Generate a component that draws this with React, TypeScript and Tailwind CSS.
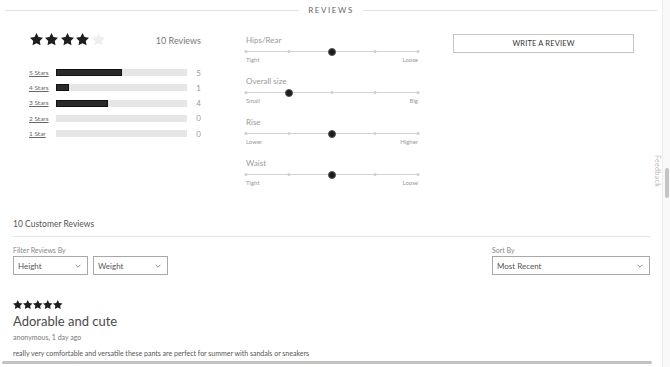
const breakdown = [
  { label: "5 Stars", count: 5, pct: 50 },
  { label: "4 Stars", count: 1, pct: 10 },
  { label: "3 Stars", count: 4, pct: 40 },
  { label: "2 Stars", count: 0, pct: 0 },
  { label: "1 Star", count: 0, pct: 0 },
];

const fits = [
  { name: "Hips/Rear", lo: "Tight", hi: "Loose", pos: 50 },
  { name: "Overall size", lo: "Small", hi: "Big", pos: 25 },
  { name: "Rise", lo: "Lower", hi: "Higher", pos: 50 },
  { name: "Waist", lo: "Tight", hi: "Loose", pos: 50 },
];

function Star({ className }: { className: string }) {
  return (
    <svg viewBox="2 2 20 20" className={className} fill="currentColor">
      <polygon points="12,2 15.09,8.26 22,9.27 17,14.14 18.18,21.02 12,17.77 5.82,21.02 7,14.14 2,9.27 8.91,8.26" />
    </svg>
  );
}

function Chevron() {
  return (
    <svg viewBox="0 0 10 6" className="w-[6px] h-[4px]" fill="none" stroke="#666" strokeWidth="1.3">
      <polyline points="1,1 5,5 9,1" />
    </svg>
  );
}

function Select({ label, className }: { label: string; className: string }) {
  return (
    <div
      className={`h-[19px] border border-[#a8a8a8] flex items-center justify-between pl-[4px] pr-[6px] text-[8px] text-[#555] ${className}`}
    >
      <span>{label}</span>
      <Chevron />
    </div>
  );
}

function FitSlider({ name, lo, hi, pos }: (typeof fits)[number]) {
  return (
    <div>
      <div className="h-[10px] leading-[10px] text-[8px] text-[#999]">{name}</div>
      <div className="relative h-[9px] mt-[2px] flex items-center">
        <div className="w-full h-px bg-[#d4d4d4]" />
        {[0, 25, 50, 75, 100].map((t) => (
          <div
            key={t}
            className="absolute w-[3px] h-[3px] rounded-full bg-[#cfcfcf] -translate-x-1/2"
            style={{ left: `${t}%` }}
          />
        ))}
        <div
          className="absolute w-[8px] h-[8px] rounded-full bg-[#1c1c1c] border border-[#555] -translate-x-1/2"
          style={{ left: `${pos}%` }}
        />
      </div>
      <div className="h-[8px] leading-[8px] flex justify-between text-[6px] text-[#999]">
        <span>{lo}</span>
        <span>{hi}</span>
      </div>
    </div>
  );
}

export default function App() {
  return (
    <div className="relative w-[670px] h-[367px] flex bg-white overflow-hidden font-['Lato','Noto_Sans',sans-serif]">
      <div className="flex-1 min-w-0 flex flex-col">
        <div className="flex-1 min-h-0 overflow-hidden">
          {/* header */}
          <div className="h-[20px] flex items-center pl-[5px] pr-[5px] gap-[8px]">
            <div className="flex-1 h-px bg-[#e2e2e2]" />
            <span className="text-[8px] tracking-[0.2em] text-[#666] px-[1px]">REVIEWS</span>
            <div className="flex-1 h-px bg-[#e2e2e2]" />
          </div>

          {/* summary */}
          <div className="flex pl-[29px]">
            <div className="w-[174px]">
              <div className="mt-[13px] flex items-end justify-between">
                <div className="flex gap-[2.4px] pl-[1px]">
                  {[0, 1, 2, 3, 4].map((i) => (
                    <Star
                      key={i}
                      className={`w-[13px] h-[13px] ${i < 4 ? "text-[#1e1e1e]" : "text-[#eeeeee]"}`}
                    />
                  ))}
                </div>
                <span className="text-[9px] leading-[10px] text-[#777] pr-[2px]">10 Reviews</span>
              </div>
              <div className="mt-[19px]">
                {breakdown.map((b) => (
                  <div key={b.label} className="h-[15.25px] flex items-center">
                    <span className="w-[27px] text-[6.5px] text-[#666] underline">{b.label}</span>
                    <div className="w-[131px] h-[7px] bg-[#e6e6e6]">
                      {b.pct > 0 && (
                        <div
                          className="h-full bg-[#2a2a2a] border border-[#111]"
                          style={{ width: `${b.pct}%` }}
                        />
                      )}
                    </div>
                    <span className="flex-1 text-right pr-[2px] text-[8px] text-[#999]">{b.count}</span>
                  </div>
                ))}
              </div>
            </div>

            <div className="w-[172px] ml-[43px] mt-[15px] flex flex-col gap-[12px]">
              {fits.map((f) => (
                <FitSlider key={f.name} {...f} />
              ))}
            </div>

            <div className="w-[181px] ml-[35px] mt-[14px]">
              <div className="h-[19px] border border-[#c4c4c4] flex items-center justify-center text-[7.5px] text-[#333] tracking-[0.02em]">
                WRITE A REVIEW
              </div>
            </div>
          </div>

          {/* reviews list */}
          <div className="pl-[13px] pr-[12px] mt-[31px]">
            <div className="h-[12px] leading-[12px] text-[8.5px] text-[#555]">10 Customer Reviews</div>
            <div className="mt-[6px] h-px bg-[#e2e2e2]" />
            <div className="mt-[8px] flex justify-between items-end">
              <div>
                <div className="h-[10px] leading-[10px] text-[7px] text-[#888]">Filter Reviews By</div>
                <div className="mt-[1px] flex gap-[5px]">
                  <Select label="Height" className="w-[75px]" />
                  <Select label="Weight" className="w-[75px]" />
                </div>
              </div>
              <div>
                <div className="h-[10px] leading-[10px] text-[7px] text-[#888]">Sort By</div>
                <Select label="Most Recent" className="mt-[1px] w-[158px]" />
              </div>
            </div>

            <div className="mt-[25px] flex gap-[0.5px]">
              {[0, 1, 2, 3, 4].map((i) => (
                <Star key={i} className="w-[9.5px] h-[9.5px] text-[#1e1e1e]" />
              ))}
            </div>
            <div className="mt-[3px] h-[17px] leading-[17px] text-[13px] text-[#4a4a4a]">Adorable and cute</div>
            <div className="mt-[2px] h-[10px] leading-[10px] text-[7px] text-[#777]">anonymous, 1 day ago</div>
            <div className="mt-[6.5px] h-[10px] leading-[10px] text-[7px] text-[#555]">
              really very comfortable and versatile these pants are perfect for summer with sandals or sneakers
            </div>
          </div>
        </div>

        {/* horizontal scrollbar */}
        <div className="h-[6px] pl-[2px] pr-[10px]">
          <div className="h-[3px] rounded-full bg-[#c2c2c2]" />
        </div>
      </div>

      {/* vertical scrollbar */}
      <div className="w-[8px] bg-[#f9f9f9] border-l border-[#ededed] pt-[168px] pl-[2px] pr-[1px]">
        <div className="h-[30px] rounded-full bg-[#c4c4c4]" />
      </div>

      <div className="absolute left-[652px] top-[155px] [writing-mode:vertical-rl] text-[7px] text-[#bbb] tracking-[0.05em]">
        Feedback
      </div>
    </div>
  );
}
